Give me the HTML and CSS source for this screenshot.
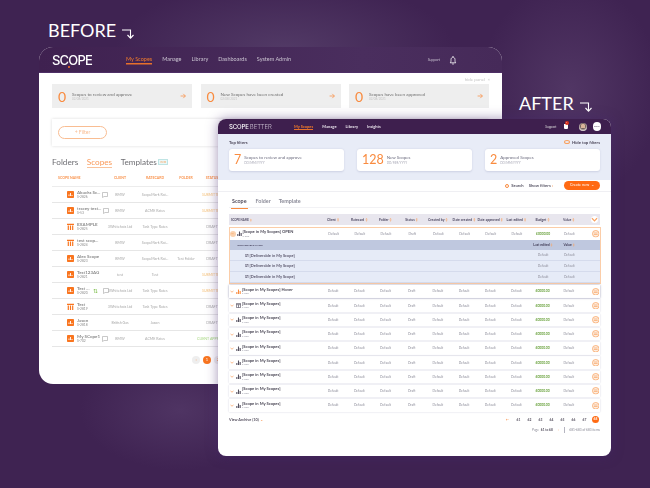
FILE: index.html
```html
<!DOCTYPE html>
<html lang="en">
<head>
<meta charset="utf-8">
<title>Scope before and after</title>
<link rel="stylesheet" href="styles.css">
</head>
<body>
<svg class="defs" width="0" height="0">
  <symbol id="turn" viewBox="0 0 12 10"><path d="M0 1h8.500v8M5.500 6l3 3.200 3-3.200" fill="none" stroke="#fff" stroke-width="1.100"/></symbol>
  <symbol id="arrow" viewBox="0 0 10 10"><path d="M1 5h8M5.500 1.500 9 5 5.500 8.500" fill="none" stroke="currentColor" stroke-width="1.200"/></symbol>
  <symbol id="bell" viewBox="0 0 10 12"><path d="M1.500 9.500c1-1 1-2 1-4 0-1.600 1.100-3 2.500-3s2.500 1.400 2.500 3c0 2 0 3 1 4zM4 11h2M5 1v1.500" fill="none" stroke="#fff" stroke-width="1"/></symbol>
  <symbol id="tile" viewBox="0 0 7 7"><rect width="7" height="7" rx=".8" fill="#f9751f"/><path d="M2 5V3.500M3.500 5V2M5 5V4" stroke="#fff" stroke-width=".9"/></symbol>
  <symbol id="tile2" viewBox="0 0 7 7"><rect width="7" height="7" fill="#fff"/><path d="M0 .7h7v1.300H0zM.7 2.600h1.200V7H.7zM2.900 2.600h1.200V7H2.900zM5.100 2.600h1.200V7H5.100z" fill="#f9751f"/></symbol>
  <symbol id="bars" viewBox="0 0 6 6"><path d="M1 6V3.500M3 6V.5M5 6V2.500" stroke="currentColor" stroke-width="1.300"/></symbol>
  <symbol id="cal" viewBox="0 0 6 6"><path d="M.5.500h5v5h-5zM.5 2h5M3 2v3.500" fill="none" stroke="#55505f" stroke-width=".8"/></symbol>
  <symbol id="face" viewBox="0 0 8 8"><circle cx="4" cy="4" r="3.500" fill="#fdeee0" stroke="#f9a15f" stroke-width=".8"/><path d="M2 3.200h4M2 4.800h4" stroke="#f9a15f" stroke-width=".7"/></symbol>
  <symbol id="chev" viewBox="0 0 4 3"><path d="M.5.700 2 2.300 3.500.700" fill="none" stroke="#f9a15f" stroke-width=".7"/></symbol>
  <symbol id="chat" viewBox="0 0 6 6"><path d="M.5.500h5v4H2L.5 5.500z" fill="none" stroke="#a5a5a5" stroke-width=".6"/></symbol>
</svg>

<h1 class="label label-before">BEFORE <svg class="turn"><use href="#turn"/></svg></h1>
<h1 class="label label-after">AFTER <svg class="turn"><use href="#turn"/></svg></h1>

<section class="win before">
  <header class="b-head">
    <div class="logo">SCOPE<i class="logo-tail"></i></div>
    <nav class="b-nav">
      <a class="on">My Scopes</a><a>Manage</a><a>Library</a><a>Dashboards</a><a>System Admin</a>
    </nav>
    <span class="b-support">Support</span>
    <svg class="b-bell"><use href="#bell"/></svg>
  </header>
  <div class="b-hide">hide panel &nbsp;×</div>
  <div class="b-cards">
    <div class="b-card"><b>0</b><div class="b-card-t">Scopes to review and approve<small>02/08/2021</small></div><svg class="b-arrow"><use href="#arrow"/></svg></div>
    <div class="b-card"><b>0</b><div class="b-card-t">New Scopes have been created<small>02/08/2021</small></div><svg class="b-arrow"><use href="#arrow"/></svg></div>
    <div class="b-card"><b>0</b><div class="b-card-t">Scopes have been approved<small>02/08/2021</small></div><svg class="b-arrow"><use href="#arrow"/></svg></div>
  </div>
  <div class="b-filter"><span class="b-pill">+ Filter</span></div>
  <div class="b-tabs"><span>Folders</span><span class="on">Scopes</span><span>Templates</span><em>new</em></div>
  <div class="b-row b-th"><span class="left">SCOPE NAME</span><span>CLIENT</span><span>RATECARD</span><span>FOLDER</span><span>STATUS</span></div>
  <div class="b-row"><div class="b-name"><svg class="b-ic"><use href="#tile"/></svg><div><strong>Abacks Sc...</strong><small>S-2826</small></div><svg class="b-chat"><use href="#chat"/></svg></div><span>BMW</span><span>ScopeMark Rat...</span><span></span><span class="sub">SUBMITTED</span></div>
  <div class="b-row"><div class="b-name"><svg class="b-ic"><use href="#tile"/></svg><div><strong>tracey test...</strong><small>S-53</small></div><svg class="b-chat"><use href="#chat"/></svg></div><span>BMW</span><span>ACME Rates</span><span></span><span class="sub">SUBMITTED</span></div>
  <div class="b-row"><div class="b-name"><svg class="b-ic"><use href="#tile2"/></svg><div><strong>EXAMPLE</strong><small>S-2825</small></div></div><span>3Whitehats Ltd</span><span>Task Type Rates</span><span></span><span>DRAFT</span></div>
  <div class="b-row"><div class="b-name"><svg class="b-ic"><use href="#tile2"/></svg><div><strong>test scop...</strong><small>S-2824</small></div></div><span>BMW</span><span>ScopeMark Rat...</span><span></span><span>DRAFT</span></div>
  <div class="b-row"><div class="b-name"><svg class="b-ic"><use href="#tile"/></svg><div><strong>Alex Scope</strong><small>S-2823</small></div></div><span>BMW</span><span>ScopeMark Rat...</span><span>Test Folder</span><span>DRAFT</span></div>
  <div class="b-row"><div class="b-name"><svg class="b-ic"><use href="#tile"/></svg><div><strong>Test123AG</strong><small>S-2821</small></div></div><span>test</span><span>Test</span><span></span><span class="sub">SUBMITTED</span></div>
  <div class="b-row"><div class="b-name"><svg class="b-ic"><use href="#tile"/></svg><div><strong>Test ...</strong><small>S-2820</small></div><i class="b-swap">⇅</i><svg class="b-chat"><use href="#chat"/></svg></div><span>3Whitehats Ltd</span><span>Task Type Rates</span><span></span><span class="sub">SUBMITTED</span></div>
  <div class="b-row"><div class="b-name"><svg class="b-ic"><use href="#tile2"/></svg><div><strong>Test</strong><small>S-2819</small></div></div><span>3Whitehats Ltd</span><span>Task Type Rates</span><span></span><span>DRAFT</span></div>
  <div class="b-row"><div class="b-name"><svg class="b-ic"><use href="#tile"/></svg><div><strong>Jason</strong><small>S-2818</small></div></div><span>British Gas</span><span>Jason</span><span></span><span>DRAFT</span></div>
  <div class="b-row"><div class="b-name"><svg class="b-ic"><use href="#tile"/></svg><div><strong>My SCope1</strong><small>S-702</small></div><svg class="b-chat"><use href="#chat"/></svg></div><span>BMW</span><span>ACME Rates</span><span></span><span class="cli">CLIENT APPROVED</span></div>
  <div class="b-pager"><span class="pg">‹</span><span class="pg cur">1</span><span class="pg">2</span></div>
</section>

<section class="win after">
  <header class="a-head">
    <div class="a-logo">SCOPE<span>BETTER</span></div>
    <nav class="a-nav"><a class="on">My Scopes</a><a>Manage</a><a>Library</a><a>Insights</a></nav>
    <span class="a-support">Support</span>
    <span class="a-cart"><i>1</i></span>
    <span class="a-avatar"></span>
    <span class="a-round">SCOPE</span>
  </header>
  <div class="a-band">
    <div class="a-band-top"><b>Top filters</b><span><i class="a-eye"></i>Hide top filters</span></div>
    <div class="a-cards">
      <div class="a-card"><b>7</b><div>Scopes to review and approve<small>DD/MM/YYYY</small></div></div>
      <div class="a-card"><b>128</b><div>New Scopes<small>DD/MM/YYYY</small></div></div>
      <div class="a-card"><b>2</b><div>Approved Scopes<small>DD/MM/YYYY</small></div></div>
    </div>
  </div>
  <div class="a-actions">
    <span class="a-search"><i></i>Search</span><span>Show filters <em>›</em></span><span class="a-create">Create new &nbsp;⌄</span>
  </div>
  <div class="a-tabs"><span class="on">Scope</span><span>Folder</span><span>Template</span></div>

  <div class="a-row a-th">
    <span class="n">SCOPE NAME <em>↕</em></span><span>Client <em>↕</em></span><span>Ratecard <em>↕</em></span><span>Folder <em>↕</em></span><span>Status <em>↕</em></span><span>Created by <em>↕</em></span><span>Date created <em>↕</em></span><span>Date approved <em>↕</em></span><span>Last edited <em>↕</em></span><span>Budget <em>↕</em></span><span>Value <em>↕</em></span><span class="a-all"><svg><use href="#chev"/></svg></span>
  </div>

  <div class="a-open">
    <div class="a-row">
      <div class="n"><i class="a-openbtn"><svg><use href="#chev"/></svg></i><svg class="a-bars"><use href="#bars"/></svg><div><strong>[Scope in My Scopes] OPEN</strong><small>S-000</small></div></div>
      <span>Default</span><span>Default</span><span>Default</span><span>Draft</span><span>Default</span><span>Default</span><span>Default</span><span>Default</span><span class="money">£0000.00</span><span>Default</span><span class="act"><svg><use href="#face"/></svg></span>
    </div>
    <div class="a-row a-subhead"><span class="n del">DELIVERABLE NAME</span><span class="c9">Last edited <em>↕</em></span><span class="c10">Value <em>↕</em></span></div>
    <div class="a-row a-sub"><span class="n del2">☑ [Deliverable in My Scope]</span><span class="c9">Default</span><span class="c10">Default</span></div>
    <div class="a-row a-sub"><span class="n del2">☑ [Deliverable in My Scope]</span><span class="c9">Default</span><span class="c10">Default</span></div>
    <div class="a-row a-sub"><span class="n del2">☑ [Deliverable in My Scope]</span><span class="c9">Default</span><span class="c10">Default</span></div>
  </div>

  <div class="a-list">
    <div class="a-row card hover"><div class="n"><svg class="a-chev"><use href="#chev"/></svg><svg class="a-bars org"><use href="#bars"/></svg><div><strong>[Scope in My Scopes] Hover</strong><small>S-000</small></div></div><span>Default</span><span>Default</span><span>Default</span><span>Draft</span><span>Default</span><span>Default</span><span>Default</span><span>Default</span><span class="money">£0000.00</span><span>Default</span><span class="act"><svg><use href="#face"/></svg></span></div>
    <div class="a-row card"><div class="n"><svg class="a-chev"><use href="#chev"/></svg><svg class="a-bars"><use href="#cal"/></svg><div><strong>[Scope in My Scopes]</strong><small>S-000</small></div></div><span>Default</span><span>Default</span><span>Default</span><span>Draft</span><span>Default</span><span>Default</span><span>Default</span><span>Default</span><span class="money">£0000.00</span><span>Default</span><span class="act"><svg><use href="#face"/></svg></span></div>
    <div class="a-row card"><div class="n"><svg class="a-chev"><use href="#chev"/></svg><svg class="a-bars"><use href="#bars"/></svg><div><strong>[Scope in My Scopes]</strong><small>S-000</small></div></div><span>Default</span><span>Default</span><span>Default</span><span>Draft</span><span>Default</span><span>Default</span><span>Default</span><span>Default</span><span class="money">£0000.00</span><span>Default</span><span class="act"><svg><use href="#face"/></svg></span></div>
    <div class="a-row card"><div class="n"><svg class="a-chev"><use href="#chev"/></svg><svg class="a-bars"><use href="#bars"/></svg><div><strong>[Scope in My Scopes]</strong><small>S-000</small></div></div><span>Default</span><span>Default</span><span>Default</span><span>Draft</span><span>Default</span><span>Default</span><span>Default</span><span>Default</span><span class="money">£0000.00</span><span>Default</span><span class="act"><svg><use href="#face"/></svg></span></div>
    <div class="a-row card"><div class="n"><svg class="a-chev"><use href="#chev"/></svg><svg class="a-bars"><use href="#bars"/></svg><div><strong>[Scope in My Scopes]</strong><small>S-000</small></div></div><span>Default</span><span>Default</span><span>Default</span><span>Draft</span><span>Default</span><span>Default</span><span>Default</span><span>Default</span><span class="money">£0000.00</span><span>Default</span><span class="act"><svg><use href="#face"/></svg></span></div>
    <div class="a-row card"><div class="n"><svg class="a-chev"><use href="#chev"/></svg><svg class="a-bars"><use href="#bars"/></svg><div><strong>[Scope in My Scopes]</strong><small>S-000</small></div></div><span>Default</span><span>Default</span><span>Default</span><span>Draft</span><span>Default</span><span>Default</span><span>Default</span><span>Default</span><span class="money">£0000.00</span><span>Default</span><span class="act"><svg><use href="#face"/></svg></span></div>
    <div class="a-row card"><div class="n"><svg class="a-chev"><use href="#chev"/></svg><svg class="a-bars"><use href="#bars"/></svg><div><strong>[Scope in My Scopes]</strong><small>S-000</small></div></div><span>Default</span><span>Default</span><span>Default</span><span>Draft</span><span>Default</span><span>Default</span><span>Default</span><span>Default</span><span class="money">£0000.00</span><span>Default</span><span class="act"><svg><use href="#face"/></svg></span></div>
    <div class="a-row card"><div class="n"><svg class="a-chev"><use href="#chev"/></svg><svg class="a-bars"><use href="#bars"/></svg><div><strong>[Scope in My Scopes]</strong><small>S-000</small></div></div><span>Default</span><span>Default</span><span>Default</span><span>Draft</span><span>Default</span><span>Default</span><span>Default</span><span>Default</span><span class="money">£0000.00</span><span>Default</span><span class="act"><svg><use href="#face"/></svg></span></div>
    <div class="a-row card"><div class="n"><svg class="a-chev"><use href="#chev"/></svg><svg class="a-bars"><use href="#bars"/></svg><div><strong>[Scope in My Scopes]</strong><small>S-000</small></div></div><span>Default</span><span>Default</span><span>Default</span><span>Draft</span><span>Default</span><span>Default</span><span>Default</span><span>Default</span><span class="money">£0000.00</span><span>Default</span><span class="act"><svg><use href="#face"/></svg></span></div>
  </div>

  <div class="a-foot">
    <span class="a-arch">View Archive (10) <em>⌄</em></span>
    <div class="a-pages"><em>←</em><span>61</span><span>62</span><span>63</span><span>64</span><span>65</span><span>66</span><span>67</span><span class="cur">68</span></div>
  </div>
  <div class="a-count">Page <b>61 to 68</b> <em>›</em> <i></i> 681-683 of 683 items</div>
</section>
</body>
</html>
```

FILE: styles.css
```css
* { box-sizing: border-box; }
html, body { margin: 0; padding: 0; }
body {
  position: relative;
  width: 650px;
  height: 488px;
  overflow: hidden;
  font-family: Lato, "Open Sans", sans-serif;
  background:
    radial-gradient(ellipse 170px 70px at 285px 50px, #523a66 0%, rgba(82,58,102,0) 100%),
    radial-gradient(ellipse 90px 110px at 570px 90px, #513664 0%, rgba(81,54,100,0) 100%),
    radial-gradient(ellipse 100px 60px at 180px 410px, #4f3463 0%, rgba(79,52,99,0) 100%),
    #3f2352;
}
.defs { position: absolute; }
em, i { font-style: normal; }
a { color: inherit; text-decoration: none; }
small { display: block; }

.label {
  position: absolute;
  margin: 0;
  color: #fff;
  font-size: 18px;
  font-weight: 400;
  line-height: 20px;
  white-space: nowrap;
  display: flex;
  gap: 6px;
}
.label-before { left: 48px; top: 20px; }
.label-after { left: 519px; top: 93px; }
.turn { width: 12px; height: 10px; margin-top: 9px; }

.win { position: absolute; overflow: hidden; background: #fff; }

/* before window */
.before {
  left: 39px; top: 47px; width: 463px; height: 337px;
  border-radius: 14px 14px 0 14px;
  filter: blur(.25px);
}
.b-head {
  height: 26px;
  background: linear-gradient(90deg, #3f2150, #4a2e5e 70%, #462a59);
  border-bottom: 1px solid #4e2f66;
  display: flex;
  align-items: center;
  padding: 0 45px 0 13px;
  color: #c9c2d0;
}
.logo {
  position: relative;
  width: 74px;
  color: #fff;
  font-family: Inter, Lato, sans-serif;
  font-size: 13px;
  font-weight: 500;
  letter-spacing: -.8px;
}
.logo-tail {
  position: absolute; left: 16px; top: 14px;
  width: 2px; height: 2px; border-radius: 50%;
  background: #f9751f;
}
.b-nav { display: flex; gap: 10px; font-size: 5.500px; flex: 1; }
.b-nav .on { color: #f07a2c; box-shadow: 0 1.500px 0 #e8702a; padding-bottom: 1px; }
.b-support { font-size: 3.500px; margin-right: 9px; }
.b-bell { width: 8px; height: 10px; }
.b-hide {
  height: 11px; padding: 3px 12px 0 0;
  text-align: right; font-size: 4.500px; color: #c6c6c6; line-height: 8px;
}
.b-cards { display: flex; gap: 8.500px; padding: 0 13px; height: 24px; }
.b-card {
  flex: 1; display: flex; align-items: center; background: #eeeeee;
  padding: 0 6px; color: #707070; font-size: 4.600px;
}
.b-card b { color: #f98b3f; font-size: 14px; font-weight: 400; width: 14px; }
.b-card-t { flex: 1; line-height: 6px; }
.b-card-t small { font-size: 3px; color: #c4c4c4; line-height: 4px; }
.b-arrow { width: 6px; height: 6px; color: #f98b3f; }
.b-filter {
  margin: 11px 13px 0; height: 27px; padding: 7px 6px;
  box-shadow: 0 0 3px rgba(0,0,0,.14);
}
.b-pill {
  display: block; width: 49px; height: 13px; border: .7px solid #f9bd92; border-radius: 7px;
  color: #f9bd92; text-align: center; font-size: 5px; line-height: 11.500px;
}
.b-tabs {
  display: flex; align-items: center; gap: 8.500px;
  margin: 9px 13px 0; height: 14px; font-size: 8.200px; color: #6e6e73;
}
.b-tabs .on { color: #f99a5b; box-shadow: 0 1px 0 #f9c29b; }
.b-tabs em {
  margin-left: -7px; width: 10px; height: 6px; border: .5px solid #bfe4e4; background: #eaf8f8;
  color: #f9a15f; font-size: 3px; line-height: 5px; text-align: center;
}
.b-row {
  display: grid;
  grid-template-columns: 53px 30px 40px 22px 30px;
  align-items: center;
  margin: 0 13px;
  height: 16px;
  border-bottom: .7px solid #e6e6e6;
  font-size: 3.600px;
  color: #a8a8a8;
  text-align: center;
  white-space: nowrap;
}
.b-th { margin-top: 1px; height: 17px; color: #f9944f; font-size: 3.500px; font-weight: 700; border-bottom-color: #ececec; }
.b-th .left { text-align: left; padding-left: 6px; }
.b-name { display: flex; align-items: center; padding-left: 15px; text-align: left; position: relative; width: 53px; }
.b-ic { width: 7px; height: 7px; flex: none; margin-right: 3px; }
.b-name strong { display: block; font-size: 4.500px; font-weight: 700; color: #8d8d8d; filter: blur(.7px); line-height: 5px; }
.b-name small { font-size: 3.300px; color: #8d8d8d; line-height: 4px; }
.b-chat { width: 6px; height: 6px; margin-left: 2px; flex: none; }
.b-swap { color: #7fbf4d; font-size: 6px; margin: 0 3px; }
.sub { color: #f6c37d; font-size: 3.500px; }
.cli { color: #a5d77e; }
.b-pager { display: flex; gap: 3px; padding: 9px 0 0 153px; }
.pg {
  width: 8px; height: 8px; border-radius: 50%; background: #eeeeee;
  color: #f98b3f; font-size: 4px; line-height: 8px; text-align: center;
}
.pg.cur { background: #f9751f; color: #fff; }

/* after window */
.after {
  left: 218px; top: 119px; width: 393px; height: 337px;
  border-radius: 8px;
  box-shadow: 0 0 12px rgba(70,40,110,.5);
  filter: blur(.2px);
}
.a-head {
  height: 15px; background: #3e1f4e;
  display: flex; align-items: center;
  padding: 0 10px 0 11px; color: #fff;
}
.a-logo { width: 65px; font-family: Inter, Lato, sans-serif; font-size: 6px; font-weight: 500; letter-spacing: -.1px; }
.a-logo span { color: #c9bfd0; font-weight: 300; margin-left: 1px; }
.a-nav { flex: 1; display: flex; gap: 9px; font-size: 4px; font-weight: 700; color: #e7e1ea; }
.a-nav .on { color: #f07a2c; box-shadow: 0 1px 0 #e8702a; }
.a-support { font-size: 3.200px; margin-right: 7px; color: #ddd; }
.a-cart { position: relative; width: 4px; height: 5px; background: #fff; border-radius: 0 0 1px 1px; margin-right: 11px; }
.a-cart i { position: absolute; top: -3px; left: 1px; width: 4px; height: 4px; border-radius: 50%; background: #d8321e; font-size: 2.500px; line-height: 4px; text-align: center; }
.a-avatar { width: 8px; height: 8px; border-radius: 50%; background: radial-gradient(circle at 50% 40%, #d9b49a 35%, #6d5a55 38%, #efe9e4 75%); margin-right: 6px; }
.a-round { width: 8.500px; height: 8.500px; border-radius: 50%; background: #fff; color: #5b4a66; font-size: 1.800px; line-height: 8.500px; text-align: center; }
.a-band { height: 46px; background: #e8ecf7; padding: 5px 11px 0; }
.a-band-top { display: flex; justify-content: space-between; align-items: center; height: 6px; font-size: 4.200px; color: #4f4a5c; font-weight: 700; }
.a-band-top b { font-weight: 700; }
.a-band-top span { display: flex; align-items: center; gap: 2px; }
.a-eye { width: 6px; height: 4px; border: .8px solid #f9a15f; border-radius: 50%; }
.a-cards { display: grid; grid-template-columns: repeat(3, 115px); gap: 13px; margin-top: 4px; }
.a-card {
  height: 22px; background: #fff; border-radius: 3px;
  box-shadow: 0 .5px 2px rgba(80,90,140,.18);
  display: flex; align-items: center; gap: 3px; padding: 0 5px;
  font-size: 4.400px; color: #6e6e80; line-height: 6px;
}
.a-card b { color: #f98b3f; font-size: 12.500px; font-weight: 400; }
.a-card small { font-size: 3px; color: #a5a5b3; line-height: 5px; }
.a-actions {
  height: 12px; display: flex; justify-content: flex-end; align-items: center;
  gap: 5px; padding: 0 11px; border-bottom: .7px solid #efeff3;
  font-size: 4.200px; font-weight: 700; color: #5b5868;
}
.a-actions em { color: #f98b3f; }
.a-search { display: flex; align-items: center; gap: 2px; }
.a-search i { width: 4px; height: 4px; border: .8px solid #f98b3f; border-radius: 50%; }
.a-create {
  width: 36px; height: 8.500px; margin-left: 6px; border-radius: 5px; background: #ff6a13;
  color: #fff; text-align: center; line-height: 8px; font-weight: 400; font-size: 3.800px;
}
.a-tabs {
  margin: 0 11px; height: 16px; display: flex; gap: 8px; padding: 6px 2px 0;
  font-size: 5.400px; color: #8b8b98; font-weight: 700; border-bottom: .7px solid #f2f2f5;
}
.a-tabs span { height: 10px; }
.a-tabs .on { color: #55505f; box-shadow: 0 1px 0 #f98b3f; padding: 0 1px; }
.a-row {
  display: grid;
  grid-template-columns: 91px repeat(10, 26.200px) 1fr;
  align-items: center;
  margin: 0 11px;
  height: 12.500px;
  font-size: 3.300px;
  color: #8d8d9a;
  text-align: center;
  white-space: nowrap;
}
.a-row em { color: #f9a15f; }
.a-row .n { text-align: left; display: flex; align-items: center; }
.a-th {
  margin: 6px 11px 2px; height: 11px; background: #e8e6ee;
  color: #4f4a63; font-weight: 700; font-size: 3.400px;
}
.a-th .n { padding-left: 2px; font-size: 2.800px; display: block; }
.a-all svg { display: block; margin-left: 9px; width: 7px; height: 7px; background: #fff; border-radius: 50%; }
.a-open { margin: 0 10.500px; border: .7px solid #fbcda8; border-bottom-width: 1px; }
.a-open .a-row { margin: 0; height: 11.500px; }
.a-open .a-subhead { height: 10.800px; background: #bfc8df; color: #3f3a55; font-weight: 700; }
.a-open .a-sub { height: 10.800px; background: #e6ebf7; border-bottom: .5px solid #d5dbec; }
.del { padding-left: 8px; font-size: 2.600px; }
.del2 { padding-left: 15px; font-size: 4px; font-weight: 700; color: #5e5a70; }
.c9 { grid-column: 10; }
.c10 { grid-column: 11; }
.a-openbtn { display: flex; width: 6px; height: 6px; margin-right: 1px; border-radius: 50%; background: #fbd2ae; align-items: center; justify-content: center; }
.a-openbtn svg { width: 3px; height: 3px; }
.a-chev { width: 4px; height: 3px; margin: 0 2px 0 1px; }
.a-bars { width: 5px; height: 5px; margin-right: 1px; color: #55505f; flex: none; }
.a-bars.org { color: #f98b3f; }
.n strong { display: block; font-size: 4.100px; color: #4d4a58; font-weight: 700; line-height: 4.500px; }
.n small { font-size: 2.500px; color: #9a9aa6; line-height: 3px; }
.money { color: #6fa544; font-weight: 700; }
.act svg { display: block; width: 7.500px; height: 7.500px; margin-left: 10px; }
.a-list { display: grid; gap: 1.750px; margin-top: 1.500px; }
.a-row.card { box-shadow: 0 0 1.500px rgba(90,90,140,.3); }
.a-row.hover { box-shadow: 0 0 2px rgba(70,70,120,.55); }
.a-foot { margin: 4px 11px 0; display: flex; justify-content: space-between; align-items: center; height: 8px; }
.a-arch { font-size: 3.800px; color: #55505f; font-weight: 700; }
.a-arch em, .a-pages em { color: #f98b3f; }
.a-pages { display: grid; grid-template-columns: repeat(9, 11px); align-items: center; text-align: center; font-size: 3.300px; color: #55505f; font-weight: 700; margin-right: -1px; }
.a-pages .cur { width: 7px; height: 7px; margin-left: 2px; border-radius: 50%; background: #ff6a13; color: #fff; line-height: 7px; }
.a-count {
  margin: 3px 11px 0; display: flex; justify-content: flex-end; align-items: center;
  gap: 2px; font-size: 3.200px; color: #8a8a96;
}
.a-count b { color: #55505f; }
.a-count em { color: #f9a15f; margin: 0 3px; }
.a-count i { width: .6px; height: 6px; background: #b5b5c0; margin-right: 3px; }
```
